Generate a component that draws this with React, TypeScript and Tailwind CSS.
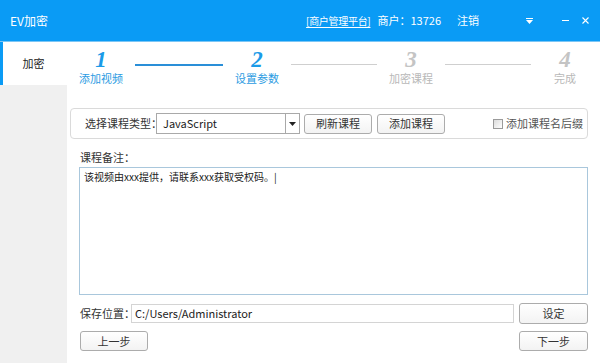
import React from "react";

const FONT = { fontFamily: '"Noto Sans CJK SC", "Liberation Sans", sans-serif' };

type Step = { num: string; label: string; active: boolean };

const STEPS: Step[] = [
  { num: "1", label: "添加视频", active: true },
  { num: "2", label: "设置参数", active: true },
  { num: "3", label: "加密课程", active: false },
  { num: "4", label: "完成", active: false },
];

function StepItem({ step }: { step: Step }) {
  return (
    <div className="flex w-[68px] shrink-0 flex-col items-center">
      <span
        className={`text-[23px] font-bold italic leading-[22px] ${step.active ? "text-[#1b9be8]" : "text-[#c4c4c4]"}`}
        style={{ fontFamily: '"Liberation Serif", serif' }}
      >
        {step.num}
      </span>
      <span className={`mt-[1px] whitespace-nowrap text-[11px] leading-[13px] ${step.active ? "text-[#2b9be2]" : "text-[#b8b8b8]"}`}>
        {step.label}
      </span>
    </div>
  );
}

function Btn({ children, className = "" }: { children: React.ReactNode; className?: string }) {
  return (
    <button
      type="button"
      className={`flex h-[20px] items-center justify-center whitespace-nowrap rounded-[3px] border border-[#acacac] bg-gradient-to-b from-white to-[#f3f3f3] text-[11px] leading-none text-[#333] ${className}`}
    >
      {children}
    </button>
  );
}

export default function App() {
  return (
    <div className="flex h-[363px] w-[600px] flex-col overflow-hidden bg-white text-[#333]" style={FONT}>
      <header className="flex h-[42px] shrink-0 items-center border-b border-[#7cc6f5] bg-[#0a9bf5] text-[11px] text-white">
        <span className="ml-[10px] text-[12px]">EV加密</span>
        <span className="ml-auto text-[10px] tracking-[-0.3px] underline underline-offset-2">[商户管理平台]</span>
        <span className="ml-[7px]">商户：13726</span>
        <span className="ml-[16px]">注销</span>
        <span className="ml-[47px] flex flex-col items-center gap-[1px]">
          <span className="h-[1px] w-[7px] bg-white" />
          <svg width="7" height="4" viewBox="0 0 7 4"><path d="M0 0h7L3.5 4z" fill="white" /></svg>
        </span>
        <span className="ml-[29px] h-[1px] w-[7px] bg-white" />
        <svg className="ml-[13px] mr-[11px]" width="7" height="7" viewBox="0 0 7 7">
          <path d="M0.5 0.5L6.5 6.5M6.5 0.5L0.5 6.5" stroke="white" strokeWidth="1.1" />
        </svg>
      </header>

      <div className="flex min-h-0 flex-1">
        <aside className="flex w-[67px] shrink-0 flex-col">
          <div className="flex h-[43px] items-center justify-center border-l-[3px] border-[#0a9bf5] bg-white pr-[3px] text-[11px] text-[#222]">
            加密
          </div>
          <div className="flex-1 bg-[#f0f0f0]" />
        </aside>

        <main className="flex min-w-0 flex-1 flex-col pr-[12px] text-[11px]">
          <div className="mt-[7px] flex items-start">
            <StepItem step={STEPS[0]} />
            <span className="mt-[15px] h-[2px] w-[88px] shrink-0 bg-[#2a8fd8]" />
            <StepItem step={STEPS[1]} />
            <span className="mt-[15px] h-[1px] w-[86px] shrink-0 bg-[#cfcfcf]" />
            <StepItem step={STEPS[2]} />
            <span className="mt-[15px] h-[1px] w-[86px] shrink-0 bg-[#cfcfcf]" />
            <StepItem step={STEPS[3]} />
          </div>

          <div className="ml-[3px] mt-[23px] flex h-[31px] items-center rounded-[4px] border border-[#dadada] pl-[14px] pr-[4px]">
            <span className="w-[71px] whitespace-nowrap">选择课程类型：</span>
            <div className="flex h-[21px] w-[144px] items-center border border-[#a9a9a9] bg-white">
              <span className="flex-1 pl-[6px] text-[#222]">JavaScript</span>
              <span className="flex h-full w-[14px] items-center justify-center border-l border-[#a9a9a9]">
                <svg width="7" height="4" viewBox="0 0 7 4"><path d="M0 0h7L3.5 4z" fill="#222" /></svg>
              </span>
            </div>
            <Btn className="ml-[4px] w-[68px]">刷新课程</Btn>
            <Btn className="ml-[5px] w-[68px]">添加课程</Btn>
            <span className="ml-auto h-[10px] w-[10px] border border-[#9a9a9a] bg-gradient-to-br from-[#dcdcdc] to-white" />
            <span className="ml-[3px] whitespace-nowrap text-[#555]">添加课程名后缀</span>
          </div>

          <div className="ml-[13px] mt-[12px] leading-[13px]">课程备注：</div>
          <div className="ml-[12px] mt-[3px] h-[128px] border border-[#a9c7dc] px-[4px] pt-[2px] text-[10px] leading-[14px] text-[#222]">
            该视频由xxx提供，请联系xxx获取受权码。|
          </div>

          <div className="ml-[13px] mt-[8px] flex items-center">
            <span className="w-[51px] whitespace-nowrap">保存位置：</span>
            <div className="flex h-[19px] flex-1 items-center border border-[#d4d4d4] pl-[3px] text-[#222]">
              C:/Users/Administrator
            </div>
            <Btn className="ml-[5px] h-[21px] w-[69px]">设定</Btn>
          </div>

          <div className="ml-[13px] mt-[7px] flex items-center justify-between">
            <Btn className="w-[68px]">上一步</Btn>
            <Btn className="w-[69px]">下一步</Btn>
          </div>
        </main>
      </div>
    </div>
  );
}
